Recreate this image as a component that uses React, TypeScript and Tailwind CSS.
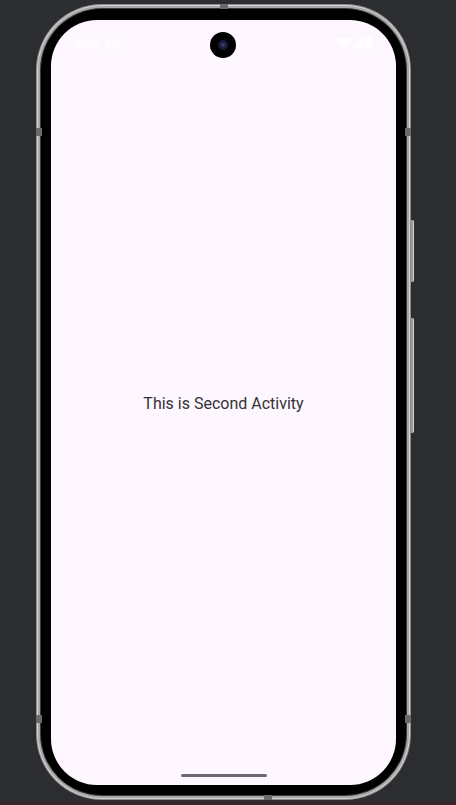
import { Shield } from "lucide-react";

function StatusBar() {
    return (
        <div className="relative flex items-center justify-between h-[42px] pt-[4px] pl-[23px] pr-[24px]">
            <div className="flex items-center gap-[6px] text-white text-[13px]">
                <span>9:59</span>
                <Shield className="w-[11px] h-[11px]" strokeWidth={2.5} />
            </div>
            {/* camera punch hole */}
            <div className="absolute left-1/2 top-[12px] -translate-x-1/2 ml-[-1px] w-[26px] h-[26px] rounded-full bg-black flex items-center justify-center">
                <div className="w-[10px] h-[10px] rounded-full bg-[#1c1a3a] flex items-center justify-center">
                    <div className="w-[4px] h-[4px] rounded-full bg-[#3b3870]" />
                </div>
            </div>
            <div className="flex items-center gap-[2px]">
                <svg width="14" height="11" viewBox="0 0 14 11">
                    <path d="M0 2 Q7 -3 14 2 L7 10 Z" fill="white" />
                </svg>
                <svg width="10" height="11" viewBox="0 0 10 11">
                    <path d="M10 0 L10 10 L0 10 Z" fill="white" />
                </svg>
                <svg width="7" height="12" viewBox="0 0 7 12">
                    <rect x="0.5" y="1" width="6" height="11" rx="1" fill="white" />
                    <rect x="2" y="0" width="3" height="1.5" fill="white" />
                </svg>
            </div>
        </div>
    );
}

export default function App() {
    return (
        <div className="w-[456px] h-[805px] bg-[#2b2d31] overflow-hidden relative">
            <div className="relative ml-[36px] mt-[4px] w-[375px] h-[796px] rounded-[66px] bg-[#8c8c8c] p-[1px]">
                {/* side buttons */}
                <div className="absolute right-[-3px] top-[216px] w-[3px] h-[62px] rounded-r-[2px] bg-[#9a9a9a] border-r border-[#d0d0d0]" />
                <div className="absolute right-[-3px] top-[314px] w-[3px] h-[115px] rounded-r-[2px] bg-[#9a9a9a] border-r border-[#d0d0d0]" />
                {/* antenna marks */}
                <div className="absolute left-[0px] top-[124px] w-[6px] h-[8px] bg-[#6a6a6a]" />
                <div className="absolute right-[0px] top-[124px] w-[6px] h-[8px] bg-[#6a6a6a]" />
                <div className="absolute left-[0px] top-[711px] w-[6px] h-[8px] bg-[#6a6a6a]" />
                <div className="absolute right-[0px] top-[711px] w-[6px] h-[8px] bg-[#6a6a6a]" />
                <div className="absolute left-[184px] top-[0px] w-[8px] h-[5px] bg-[#6a6a6a]" />
                <div className="absolute left-[228px] bottom-[0px] w-[8px] h-[5px] bg-[#6a6a6a]" />

                <div className="w-full h-full rounded-[65px] bg-[#d4d4d4] p-[1px]">
                    <div className="w-full h-full rounded-[64px] bg-[#a8a8a8] p-[2px]">
                        <div className="w-full h-full rounded-[62px] bg-[#3a3a3a] p-[1px]">
                            <div className="w-full h-full rounded-[61px] bg-black pt-[11px] px-[10px] pb-[10px]">
                                <div className="w-full h-full rounded-[46px] bg-[#fef7ff] flex flex-col overflow-hidden">
                                    <StatusBar />
                                    <div
                                        className="flex-1 flex items-center justify-center pb-[28px] text-[16px] text-[#333238]"
                                        style={{ fontFamily: "Roboto, 'Noto Sans', sans-serif" }}
                                    >
                                        This is Second Activity
                                    </div>
                                    <div className="flex justify-center pb-[8px]">
                                        <div className="w-[86px] h-[3px] rounded-full bg-[#6b6870]" />
                                    </div>
                                </div>
                            </div>
                        </div>
                    </div>
                </div>
            </div>
            <div className="absolute left-0 right-0 bottom-0 h-[4px] bg-[#35262a]" />
        </div>
    );
}
